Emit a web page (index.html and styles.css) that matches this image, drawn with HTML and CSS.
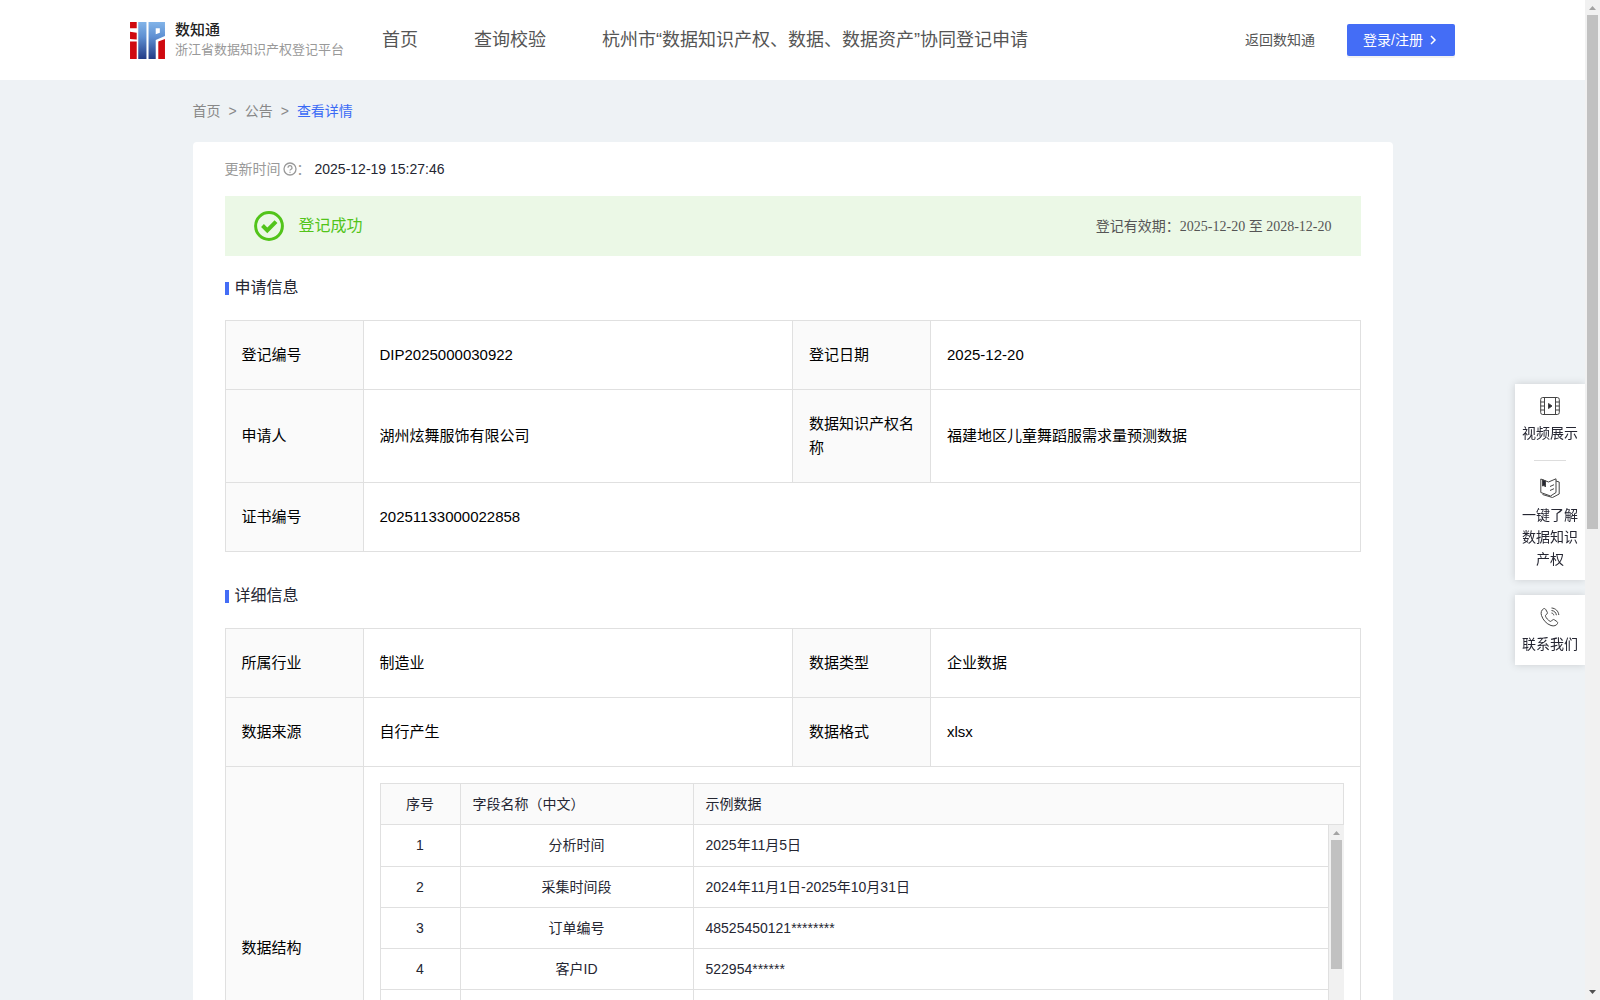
FILE: index.html
```
<!DOCTYPE html>
<html lang="zh-CN">
  <head>
    <meta charset="UTF-8" />
    <title>数知通</title>
    <link rel="stylesheet" href="styles.css">
  </head>
  <body>
    <div class="page">
      <header class="header">
        <a class="logo" href="#">
          <svg class="logo-mark" viewBox="0 0 34 36" aria-hidden="true">
            <defs>
              <linearGradient id="blue" x1="0" y1="0" x2="0" y2="36" gradientUnits="userSpaceOnUse">
                <stop offset="0" stop-color="#82b4e8" />
                <stop offset="0.4" stop-color="#5f90d2" />
                <stop offset="1" stop-color="#223a86" />
              </linearGradient>
            </defs>
            <path fill="#cf0a10" d="M0 0h6.500v6H0zM0 9.500l6.500 1V17L0 16.500zM0 19h6.500v17H0zM27.500 19l6.500-2.500V36h-6.500z" />
            <path fill="url(#blue)" fill-rule="evenodd" d="M8 0h8v36H8zM18 0h16v13.500l-9 4V36h-7zM25 6v6l4-1.500V6z" />
          </svg>
          <span class="logo-text">
            <strong>数知通</strong>
            <small>浙江省数据知识产权登记平台</small>
          </span>
        </a>
        <nav class="nav">
          <a href="#">首页</a>
          <a href="#">查询校验</a>
          <a href="#">杭州市“数据知识产权、数据、数据资产”协同登记申请</a>
        </nav>
        <a class="back" href="#">返回数知通</a>
        <button class="login" type="button">
          登录/注册
          <svg viewBox="0 0 12 12" aria-hidden="true"><path d="M4 2l4 4-4 4" /></svg>
        </button>
      </header>

      <main class="container">
        <nav class="crumb">
          <a href="#">首页</a><span>&gt;</span><a href="#">公告</a><span>&gt;</span><a class="current" href="#">查看详情</a>
        </nav>

        <div class="card">
          <div class="update">
            <span>更新时间</span>
            <svg viewBox="0 0 14 14" aria-hidden="true">
              <circle cx="7" cy="7" r="6" />
              <path d="M5 5.700a2 2 0 1 1 2.800 1.800q-.8.400-.8 1.100M7 9.700v1.100" />
            </svg>
            <span>：</span>
            <time>2025-12-19 15:27:46</time>
          </div>

          <div class="status">
            <svg viewBox="0 0 30 30" aria-hidden="true">
              <circle cx="15" cy="15" r="13.400" />
              <path class="tick" d="M8.500 14.500l4.800 4.800 8.700-8.700" />
            </svg>
            <span class="status-text">登记成功</span>
            <span class="valid">登记有效期：<span class="dates">2025-12-20 至 2028-12-20</span></span>
          </div>

          <h2 class="title">申请信息</h2>
          <table class="info">
            <colgroup><col class="label"><col><col class="label"><col></colgroup>
            <tr>
              <th scope="row">登记编号</th>
              <td>DIP2025000030922</td>
              <th scope="row">登记日期</th>
              <td>2025-12-20</td>
            </tr>
            <tr>
              <th scope="row">申请人</th>
              <td>湖州炫舞服饰有限公司</td>
              <th scope="row">数据知识产权名称</th>
              <td>福建地区儿童舞蹈服需求量预测数据</td>
            </tr>
            <tr>
              <th scope="row">证书编号</th>
              <td colspan="3">20251133000022858</td>
            </tr>
          </table>

          <h2 class="title">详细信息</h2>
          <table class="info">
            <colgroup><col class="label"><col><col class="label"><col></colgroup>
            <tr>
              <th scope="row">所属行业</th>
              <td>制造业</td>
              <th scope="row">数据类型</th>
              <td>企业数据</td>
            </tr>
            <tr>
              <th scope="row">数据来源</th>
              <td>自行产生</td>
              <th scope="row">数据格式</th>
              <td>xlsx</td>
            </tr>
            <tr>
              <th scope="row">数据结构</th>
              <td class="nested" colspan="3">
                <table class="fields">
                  <colgroup><col class="no"><col class="name"><col></colgroup>
                  <tr><th>序号</th><th>字段名称（中文）</th><th>示例数据</th></tr>
                </table>
                <div class="scroll">
                  <div class="scroll-body">
                    <table class="fields">
                      <colgroup><col class="no"><col class="name"><col></colgroup>
                      <tr><td>1</td><td>分析时间</td><td>2025年11月5日</td></tr>
                      <tr><td>2</td><td>采集时间段</td><td>2024年11月1日-2025年10月31日</td></tr>
                      <tr><td>3</td><td>订单编号</td><td>48525450121********</td></tr>
                      <tr><td>4</td><td>客户ID</td><td>522954******</td></tr>
                      <tr><td></td><td></td><td></td></tr>
                      <tr><td></td><td></td><td></td></tr>
                      <tr><td></td><td></td><td></td></tr>
                    </table>
                  </div>
                  <div class="bar bar-inner" aria-hidden="true">
                    <svg viewBox="0 0 15 15"><path class="off" d="M4 10h7L7.500 6z" /></svg>
                    <div class="track"><div class="thumb"></div></div>
                    <svg viewBox="0 0 15 15"><path d="M4 5h7L7.500 9z" /></svg>
                  </div>
                </div>
              </td>
            </tr>
          </table>
        </div>
      </main>

      <aside class="side">
        <div class="side-box">
          <a href="#">
            <svg viewBox="0 0 20 20" aria-hidden="true">
              <rect x="0.700" y="1.500" width="18.600" height="17" rx="2" />
              <path d="M4.500 1.500v17M15.500 1.500v17M.5 6h4M.5 10h4M.5 14h4M15.500 6h4M15.500 10h4M15.500 14h4" />
              <path class="solid" d="M8.500 7.500l3.500 2.500-3.500 2.500z" />
            </svg>
            <span>视频展示</span>
          </a>
          <hr>
          <a href="#">
            <svg viewBox="0 0 20 20" aria-hidden="true">
              <path d="M.8 1L8.500 4 16 .8v13.700L10.500 18 .8 14.500zM16 3l3.200 1v12L12.500 19.500 2.500 16.500" />
              <path class="solid" d="M2.500 1.800l3 1V9L4 7.500 2.500 8z" />
              <path d="M10 8.500l4-1.800M10 12.500l4-1.800" />
            </svg>
            <span>一键了解数据知识产权</span>
          </a>
        </div>
        <div class="side-box">
          <a href="#">
            <svg viewBox="0 0 20 20" aria-hidden="true">
              <path d="M3.500 1.800C1.500 3 .5 5.500 1.500 8.500c1.500 4.500 5 8.500 9.500 10 3 1 5.500 0 6.500-2 .4-.8 0-1.500-.6-2l-2.600-1.700c-.8-.5-1.500-.3-2 .3l-.9 1c-.4.400-1 .4-1.500.1-2-1.200-3.600-3-4.400-5-.2-.6 0-1 .4-1.400l1-.8c.6-.5.7-1.200.3-1.900L5.600 2.300c-.5-.8-1.300-.9-2.100-.5z" />
              <path d="M11.500 1c4 .2 7 3.200 7.300 7M11.500 3.500c2.700.2 4.600 2 4.900 4.700M11.500 6c1.300.2 2.100 1 2.300 2.300" />
            </svg>
            <span>联系我们</span>
          </a>
        </div>
      </aside>
    </div>

    <div class="bar bar-page" aria-hidden="true">
      <svg viewBox="0 0 15 15"><path class="off" d="M4 10h7L7.500 6z" /></svg>
      <div class="track"><div class="thumb"></div></div>
      <svg viewBox="0 0 15 15"><path d="M4 5h7L7.500 9z" /></svg>
    </div>
  </body>
</html>
```

FILE: styles.css
```
* {
  box-sizing: border-box;
}
body {
  display: flex;
  height: 100vh;
  margin: 0;
  background: #eef2f5;
  color: #252632;
  font-family: "Liberation Sans", "Noto Sans CJK SC", sans-serif;
  font-size: 14px;
  line-height: 22px;
}
a {
  color: inherit;
  text-decoration: none;
}
.page {
  flex: 1;
  min-width: 0;
  overflow-y: auto;
}
.header {
  display: flex;
  align-items: center;
  height: 80px;
  padding: 0 130px;
  background: #fff;
  color: #555;
}
.logo {
  display: flex;
  align-items: center;
  gap: 10px;
  margin-right: 38px;
}
.logo-mark {
  width: 35px;
  height: 37px;
}
.logo-text {
  display: flex;
  flex-direction: column;
}
.logo-text strong {
  color: #222;
  font-size: 15px;
  font-weight: 500;
  line-height: 20px;
}
.logo-text small {
  color: #999;
  font-size: 13px;
  line-height: 20px;
}
.nav {
  display: flex;
  gap: 56px;
  font-size: 18px;
}
.back {
  margin-left: auto;
  margin-right: 32px;
}
.login {
  display: flex;
  align-items: center;
  gap: 4px;
  height: 32px;
  padding: 0 16px;
  border: 0;
  border-radius: 2px;
  background: #446df6;
  box-shadow: 0 2px 0 rgba(0, 0, 0, 0.05);
  color: #fff;
  font: inherit;
}
.login svg {
  width: 12px;
  height: 12px;
  fill: none;
  stroke: currentColor;
  stroke-width: 1.5;
}
.container {
  max-width: 1200px;
  margin: 0 auto;
}
.crumb {
  display: flex;
  gap: 8px;
  padding: 20px 0;
  color: #888;
}
.crumb .current {
  color: #3a6af5;
}
.card {
  padding: 16px 32px;
  border-radius: 4px;
  background: #fff;
}
.update {
  display: flex;
  align-items: center;
  color: #999;
}
.update svg {
  width: 14px;
  height: 14px;
  margin-left: 2px;
  fill: none;
  stroke: #999;
  stroke-width: 1.3;
}
.update time {
  margin-left: 4px;
  color: #252632;
}
.status {
  display: flex;
  align-items: center;
  gap: 15px;
  height: 60px;
  margin-top: 16px;
  padding: 0 29px;
  background: #ebf8e6;
}
.status svg {
  width: 30px;
  height: 30px;
  fill: none;
  stroke: #52c41a;
  stroke-width: 3;
}
.status .tick {
  stroke-width: 4;
}
.status-text {
  color: #52c41a;
  font-size: 16px;
}
.valid {
  margin-left: auto;
  color: #555;
}
.dates {
  font-family: "Liberation Serif", "Noto Sans CJK SC", serif;
}
.title {
  display: flex;
  align-items: center;
  gap: 6px;
  margin: 20px 0;
  font-size: 16px;
  font-weight: 400;
  line-height: 24px;
}
.title::before {
  content: "";
  width: 4px;
  height: 13px;
  background: #446df6;
}
table {
  width: 100%;
  border-collapse: collapse;
  table-layout: fixed;
}
th {
  background: #fafafa;
  font-weight: 400;
  text-align: left;
}
th,
td {
  border: 1px solid #e0e0e0;
}
.info {
  margin-bottom: 32px;
  color: #000;
  font-size: 15px;
  line-height: 24px;
}
.info .label {
  width: 138px;
}
.info th,
.info td {
  padding: 22px 16px;
}
.info .nested {
  padding: 16px;
}
.fields {
  color: #252632;
  font-size: 14px;
  line-height: 20px;
}
.fields .no {
  width: 80px;
}
.fields .name {
  width: 233px;
}
.info .fields th,
.info .fields td {
  height: 41px;
  padding: 10px 12px;
}
.fields td,
.fields th:first-child {
  text-align: center;
}
.fields td:last-child {
  text-align: left;
}
.scroll {
  display: flex;
  height: 287px;
}
.scroll-body {
  flex: 1;
  overflow-y: auto;
}
.scroll tr:first-child td {
  border-top: 0;
}

/* scrollbars */
.bar {
  display: flex;
  flex-direction: column;
  flex: none;
  width: 15px;
  background: #f1f1f1;
}
.bar svg {
  width: 15px;
  height: 15px;
  fill: #505050;
}
.bar .off {
  fill: #a3a3a3;
}
.track {
  flex: 1;
  padding: 0 2px;
}
.thumb {
  height: 50%;
  background: #c1c1c1;
}
.bar-page .thumb {
  height: 53%;
}

.side {
  position: fixed;
  top: 384px;
  right: 15px;
  display: flex;
  flex-direction: column;
  gap: 15px;
  width: 70px;
  text-align: center;
}
.side-box {
  padding: 12px 7px 10px;
  background: #fff;
  box-shadow: 0 0 8px rgba(0, 0, 0, 0.15);
}
.side-box a {
  display: flex;
  flex-direction: column;
  align-items: center;
  gap: 6px;
}
.side-box svg {
  width: 20px;
  height: 20px;
  fill: none;
  stroke: #444;
}
.side-box .solid {
  fill: #252632;
}
.side-box hr {
  width: 32px;
  margin: 16px auto 17px;
  border: 0;
  border-top: 1px solid #ddd;
}
.bar-page {
  position: relative;
  z-index: 1;
}
```
